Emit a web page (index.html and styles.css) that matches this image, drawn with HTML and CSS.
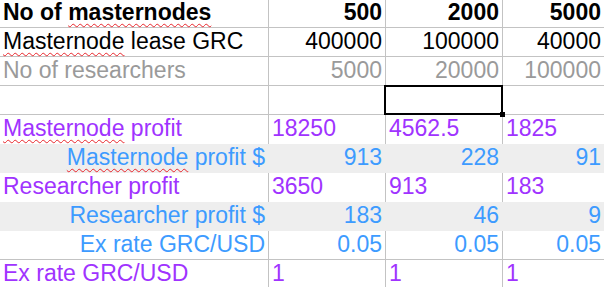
FILE: index.html
```html
<!DOCTYPE html>
<html>
<head>
<meta charset="utf-8">
<link rel="stylesheet" href="styles.css">
</head>
<body>
<div class="sheet">
  <div class="c lbl bold line"><span>No of </span><span class="spell">masternodes</span></div>
  <div class="c num bold line">500</div>
  <div class="c num bold line">2000</div>
  <div class="c num bold line last">5000</div>

  <div class="c lbl line"><span class="spell">Masternode</span> lease GRC</div>
  <div class="c num line">400000</div>
  <div class="c num line">100000</div>
  <div class="c num line last">40000</div>

  <div class="c lbl grey line">No of researchers</div>
  <div class="c num grey line">5000</div>
  <div class="c num grey line">20000</div>
  <div class="c num grey line last">100000</div>

  <div class="c line"></div>
  <div class="c line"></div>
  <div class="c line sel"></div>
  <div class="c line last"></div>

  <div class="c lbl purple"><span class="spell">Masternode</span> profit</div>
  <div class="c purple">18250</div>
  <div class="c purple">4562.5</div>
  <div class="c purple last">1825</div>

  <div class="c num blue band"><span class="spell">Masternode</span> profit $</div>
  <div class="c num blue band">913</div>
  <div class="c num blue band">228</div>
  <div class="c num blue band">91</div>

  <div class="c lbl purple">Researcher profit</div>
  <div class="c purple">3650</div>
  <div class="c purple">913</div>
  <div class="c purple last">183</div>

  <div class="c num blue band">Researcher profit $</div>
  <div class="c num blue band">183</div>
  <div class="c num blue band">46</div>
  <div class="c num blue band">9</div>

  <div class="c num blue line">Ex rate GRC/USD</div>
  <div class="c num blue line">0.05</div>
  <div class="c num blue line">0.05</div>
  <div class="c num blue line last">0.05</div>

  <div class="c lbl purple">Ex rate GRC/USD</div>
  <div class="c purple">1</div>
  <div class="c purple">1</div>
  <div class="c purple last">1</div>
</div>
</body>
</html>
```

FILE: styles.css
```css
html, body {
  margin: 0;
  padding: 0;
  background: #ffffff;
  overflow: hidden;
}

.sheet {
  display: grid;
  grid-template-columns: 269px 117px 117px 102px;
  grid-template-rows: 28px;
  grid-auto-rows: 29px;
  width: 605px;
  font-family: "Liberation Sans", Arial, sans-serif;
  font-size: 23px;
  line-height: 26px;
  color: #000000;
}

.c {
  box-sizing: border-box;
  border-right: 1px solid #c3c3c3;
  padding: 0 3px;
  white-space: nowrap;
  overflow: visible;
  position: relative;
}

.line {
  border-bottom: 1px solid #c3c3c3;
}

.sheet > .c:nth-child(-n+4) {
  line-height: 24px;
}

.num {
  text-align: right;
}

.bold {
  font-weight: bold;
}

.grey {
  color: #9a9a9a;
}

.purple {
  color: #a033ff;
}

.blue {
  color: #3d9bff;
}

.band {
  background: #eeeeee;
  border-right-color: #eeeeee;
}

.spell {
  text-decoration: underline wavy #e8262c;
  text-decoration-thickness: 1px;
  text-underline-offset: 3px;
  text-decoration-skip-ink: none;
}

.sel {
  z-index: 2;
}

.sel::after {
  content: "";
  position: absolute;
  left: -2px;
  right: -1px;
  top: -1px;
  bottom: -1px;
  border: 2px solid #000000;
}

.sel::before {
  content: "";
  position: absolute;
  right: -3px;
  bottom: -3px;
  width: 5px;
  height: 5px;
  background: #000000;
  z-index: 3;
}
```
